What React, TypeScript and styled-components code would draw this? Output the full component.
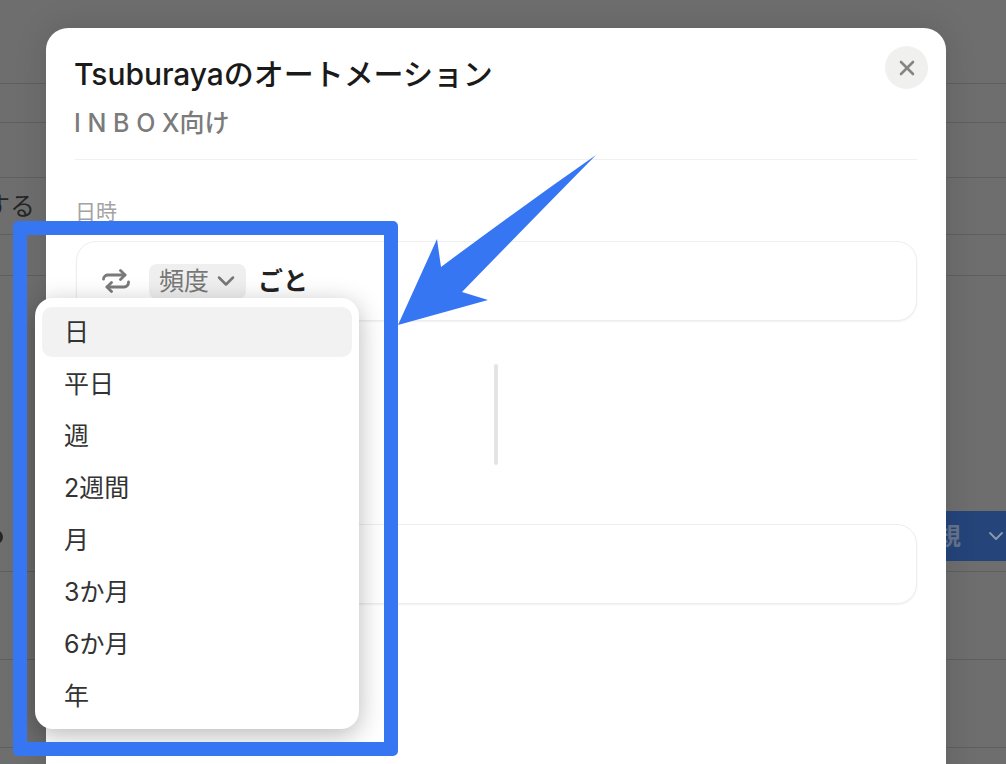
import React from "react";
import styled, { createGlobalStyle } from "styled-components";
import { ChevronDown, X } from "lucide-react";

const FONT = `Inter, "Noto Sans CJK JP", sans-serif`;

const GlobalStyle = createGlobalStyle`
  html, body {
    margin: 0;
    padding: 0;
    background: #6e6e6e;
    font-family: ${FONT};
  }
`;

const Page = styled.div`
  position: relative;
  width: 1006px;
  height: 764px;
  overflow: hidden;
  background: #6e6e6e;
`;

const BackRow = styled.div<{ $h: number }>`
  display: flex;
  align-items: center;
  justify-content: space-between;
  box-sizing: border-box;
  height: ${(p) => p.$h}px;
  border-bottom: 1px solid #5f5f5f;
`;

const BackText = styled.span`
  margin: 0 0 5px -15px;
  font-size: 25px;
  color: #262626;
`;

const Dot = styled.span`
  align-self: flex-end;
  width: 14px;
  height: 14px;
  margin: 0 0 27px -11px;
  border-radius: 50%;
  background: #262626;
`;

const NewButton = styled.div`
  display: flex;
  align-self: flex-end;
  margin: 0 -60px 10px 0;
  height: 50px;
  width: 160px;
  background: #24447a;
  color: #65738c;
  font-size: 24px;
  font-weight: 700;
`;

const NewLabel = styled.span`
  display: flex;
  align-items: center;
  justify-content: flex-end;
  box-sizing: border-box;
  width: 70px;
  padding: 0 14px 4px 0;
  border-right: 1px solid #2a4672;
  flex-shrink: 0;
`;

const NewChevron = styled.span`
  display: flex;
  align-items: center;
  padding-left: 8px;
`;

const Modal = styled.div`
  position: absolute;
  left: 46px;
  top: 28px;
  box-sizing: border-box;
  width: 900px;
  height: 800px;
  padding: 26px 29px 0;
  background: #fff;
  border-radius: 22px;
  box-shadow: 0 0 34px rgba(0, 0, 0, 0.12);
`;

const Title = styled.h1`
  margin: 0 0 0 -1px;
  font-size: 30px;
  line-height: 40px;
  font-weight: 500;
  letter-spacing: -0.05px;
  color: #1a1a1a;
`;

const Subtitle = styled.p`
  margin: 14px 0 0 -1px;
  font-size: 25px;
  line-height: 30px;
  font-weight: 500;
  color: #7b7b7b;
`;

const Divider = styled.hr`
  margin: 21px 0 0;
  border: 0;
  border-top: 1px solid #f0f0f0;
`;

const FieldLabel = styled.div`
  margin: 38px 0 15px;
  font-size: 21px;
  line-height: 28px;
  color: #a3a3a3;
`;

const Card = styled.div`
  display: flex;
  align-items: center;
  box-sizing: border-box;
  height: 80px;
  margin-left: 1px;
  padding: 0 25px;
  background: #fff;
  border: 1px solid #eeeeee;
  border-radius: 20px;
  box-shadow: 0 1px 2px rgba(0, 0, 0, 0.06);
`;

const RepeatIcon = styled.svg`
  width: 28px;
  height: 24px;
  color: #7a7a7a;
  flex-shrink: 0;
`;

const Pill = styled.span`
  display: flex;
  align-items: center;
  gap: 3px;
  height: 35px;
  margin-left: 19px;
  padding: 0 6px 0 10px;
  background: #efefef;
  border-radius: 8px;
  color: #777;
`;

const PillText = styled.span`
  margin-bottom: 4px;
  font-size: 25px;
`;

const Suffix = styled.span`
  margin: 0 0 4px 12px;
  font-size: 25px;
  font-weight: 700;
  color: #222;
`;

const PickerRow = styled.div`
  display: flex;
  justify-content: center;
  margin: 43px 0 59px;
`;

const PickerRule = styled.div`
  width: 4px;
  height: 101px;
  border-radius: 2px;
  background: #e4e4e4;
`;

const CloseButton = styled.button`
  position: absolute;
  top: 18px;
  right: 18px;
  display: flex;
  align-items: center;
  justify-content: center;
  width: 43px;
  height: 43px;
  padding: 0;
  border: 0;
  border-radius: 50%;
  background: #f0f0ef;
  color: #858585;
`;

const Menu = styled.ul`
  position: absolute;
  left: 35px;
  top: 298px;
  box-sizing: border-box;
  width: 324px;
  height: 431px;
  margin: 0;
  padding: 9px 7px;
  list-style: none;
  background: #fff;
  border-radius: 18px;
  box-shadow: 0 6px 26px rgba(0, 0, 0, 0.28);
`;

const MenuItem = styled.li<{ $active?: boolean }>`
  display: flex;
  align-items: center;
  box-sizing: border-box;
  height: 50px;
  margin-bottom: 2px;
  padding: 0 0 5px 22px;
  border-radius: 10px;
  font-size: 25px;
  color: #333;
  background: ${(p) => (p.$active ? "#f2f2f2" : "transparent")};
`;

const Frame = styled.div`
  position: absolute;
  left: 13px;
  top: 221px;
  box-sizing: border-box;
  width: 385px;
  height: 535px;
  border: 14px solid #3776f3;
  border-radius: 5px;
`;

const Arrow = styled.svg`
  position: absolute;
  left: 390px;
  top: 150px;
  width: 210px;
  height: 180px;
`;

const items = ["日", "平日", "週", "2週間", "月", "3か月", "6か月", "年"];

const App = () => {
  return (
    <Page>
      <GlobalStyle />
      <BackRow $h={84} />
      <BackRow $h={39} />
      <BackRow $h={55} />
      <BackRow $h={57}>
        <BackText>する</BackText>
      </BackRow>
      <BackRow $h={41} />
      <BackRow $h={296}>
        <Dot />
        <NewButton>
          <NewLabel>新規</NewLabel>
          <NewChevron>
            <ChevronDown size={24} color="#8a96aa" strokeWidth={2} />
          </NewChevron>
        </NewButton>
      </BackRow>
      <BackRow $h={88} />
      <BackRow $h={88} />

      <Modal>
        <Title>Tsuburayaのオートメーション</Title>
        <Subtitle>I N B O X向け</Subtitle>
        <Divider />
        <FieldLabel>日時</FieldLabel>
        <Card>
          <RepeatIcon viewBox="0 0 28 24" fill="none" stroke="currentColor" strokeWidth="2.8" strokeLinecap="round" strokeLinejoin="round">
            <path d="M1.5 10a4.5 4.5 0 0 1 4.5-4h17" />
            <path d="M18.5 1.5l4.5 4.5-4.5 4.5" />
            <path d="M26.5 13a4.5 4.5 0 0 1-4.5 5H5" />
            <path d="M9.5 13.5L5 18l4.5 4.5" />
          </RepeatIcon>
          <Pill>
            <PillText>頻度</PillText>
            <ChevronDown size={28} strokeWidth={2.2} />
          </Pill>
          <Suffix>ごと</Suffix>
        </Card>
        <PickerRow>
          <PickerRule />
        </PickerRow>
        <Card />
        <CloseButton>
          <X size={24} strokeWidth={2.6} />
        </CloseButton>
      </Modal>

      <Menu>
        {items.map((item, i) => (
          <MenuItem key={item} $active={i === 0}>
            {item}
          </MenuItem>
        ))}
      </Menu>

      <Frame />
      <Arrow viewBox="390 150 210 180">
        <path d="M398 325L437 239L441 267Q520 208 596 155Q530 222 462 292L488 300Z" fill="#3776f3" />
      </Arrow>
    </Page>
  );
};

export default App;
